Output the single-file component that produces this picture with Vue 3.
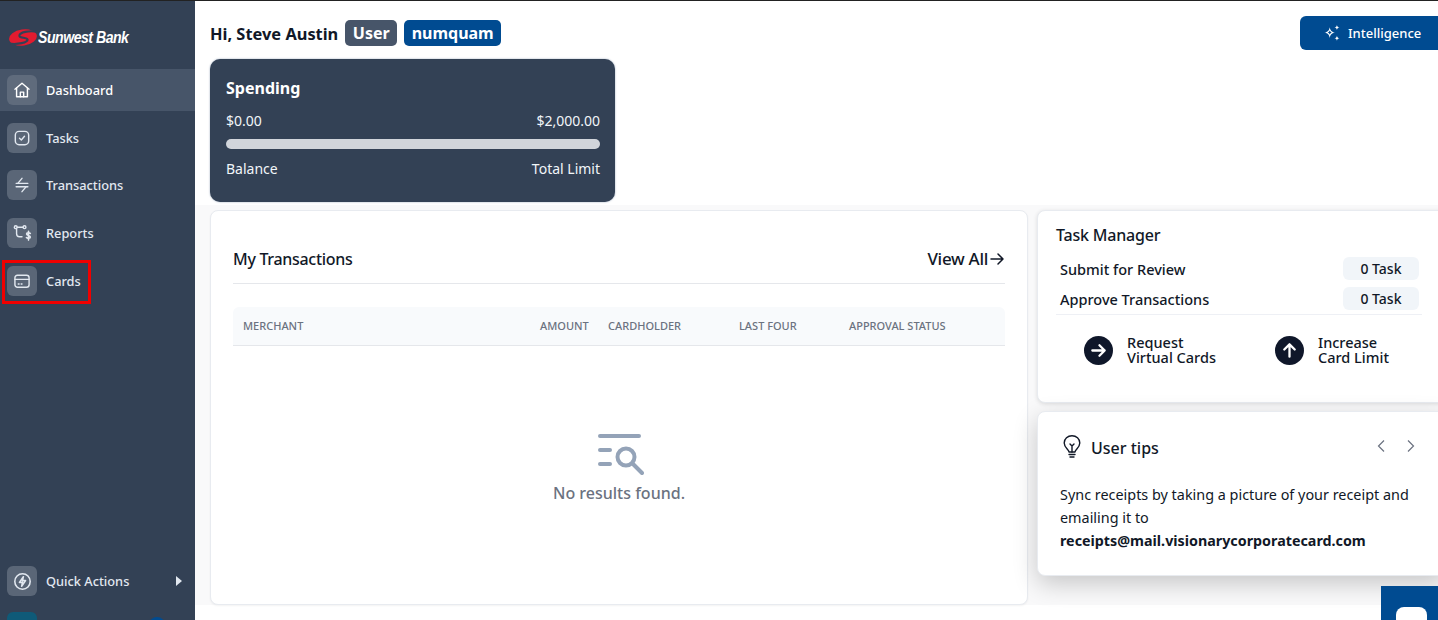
<script setup>
const navItems = [
  { label: "Dashboard", icon: "home", active: true },
  { label: "Tasks", icon: "tasks" },
  { label: "Transactions", icon: "swap" },
  { label: "Reports", icon: "reports" },
  { label: "Cards", icon: "card", marked: true },
];

const columns = ["Merchant", "Amount", "Cardholder", "Last Four", "Approval Status"];

const taskRows = [
  { label: "Submit for Review", count: "0 Task" },
  { label: "Approve Transactions", count: "0 Task" },
];
</script>

<template>
  <div class="page">
    <aside class="sidebar">
      <div class="logo">
        <svg class="logo-mark" viewBox="0 0 28 18" width="28" height="19">
          <ellipse cx="14" cy="9" rx="14" ry="8.200" transform="rotate(-8 14 9)" fill="#e31b2f" />
          <path d="M29 3.500C20 1.500 10 4 10.500 7.500 11 10 18 8.500 18.500 11 19 14 9 16.500 -1 15" fill="none" stroke="#334155" stroke-width="2.200" />
        </svg>
        <span class="logo-text">Sunwest Bank</span>
      </div>

      <nav class="nav">
        <a
          v-for="item in navItems"
          :key="item.label"
          class="nav-item"
          :class="{ active: item.active }"
        >
          <span class="nav-icon">
            <svg viewBox="0 0 24 24" width="20" height="20" fill="none" stroke="currentColor" stroke-width="1.700" stroke-linecap="round" stroke-linejoin="round">
              <template v-if="item.icon === 'home'">
                <path d="M3.500 11 12 3.800 20.500 11" />
                <path d="M5.500 9.500V20h13V9.500" />
                <path d="M10 20v-5.500h4V20" />
              </template>
              <template v-else-if="item.icon === 'tasks'">
                <rect x="4" y="4" width="16" height="16" rx="4.500" />
                <path d="m9 12.300 2.200 2 3.800-4.300" />
              </template>
              <template v-else-if="item.icon === 'swap'">
                <path d="M5 10h14" />
                <path d="M12 4 7 10" />
                <path d="M5 14h14" />
                <path d="m12 20 5-6" />
              </template>
              <template v-else-if="item.icon === 'reports'">
                <circle cx="4.500" cy="5" r="1.700" />
                <circle cx="15" cy="5" r="1.700" />
                <path d="M6.200 5h7.100" />
                <path d="M5.500 7v6a3.500 3.500 0 0 0 3.500 3.500h3" />
                <path d="M22 12.500c-1-1.200-4.500-1.200-4.500.7s4.500 1.500 4.500 3.500-3.500 2.200-4.700.8M19.800 10v10.500" stroke-width="1.900" />
              </template>
              <template v-else>
                <rect x="3.500" y="5" width="17" height="14.500" rx="3" />
                <path d="M3.500 10h17" />
                <path d="M7.500 15.500h1M11 15.500h1" />
              </template>
            </svg>
          </span>
          <span class="nav-label">{{ item.label }}</span>
          <span v-if="item.marked" class="marker"></span>
        </a>
      </nav>

      <div class="quick-actions">
        <a class="nav-item">
          <span class="nav-icon">
            <svg viewBox="0 0 24 24" width="21" height="21" fill="none" stroke="currentColor" stroke-width="1.800" stroke-linejoin="round">
              <circle cx="12" cy="12" r="8.800" />
              <path d="M13 6.500 8.500 13H12l-1 4.500 4.500-6.500H12z" />
            </svg>
          </span>
          <span class="nav-label">Quick Actions</span>
          <span class="caret"></span>
        </a>
        <div class="account">
          <span class="account-box"></span>
          <span class="account-dot"></span>
        </div>
      </div>
    </aside>

    <main class="main">
      <section class="top">
        <header class="greeting-row">
          <div class="greeting">
            <h1>Hi, Steve Austin</h1>
            <span class="badge badge-user">User</span>
            <span class="badge badge-org">numquam</span>
          </div>
          <button class="intelligence">
            <svg viewBox="0 0 20 20" width="18" height="18" fill="#fff">
              <path d="M7.500 3.500c.7 3.800 2.200 5.300 6 6-3.800.7-5.300 2.200-6 6-.7-3.800-2.200-5.300-6-6 3.800-.7 5.300-2.200 6-6zM7.500 7.300c-.4 1-1.100 1.800-2.200 2.200 1.100.4 1.800 1.200 2.200 2.200.4-1 1.100-1.800 2.200-2.200-1.100-.4-1.800-1.200-2.200-2.200z" fill-rule="evenodd" />
              <path d="M15.500 1c.3 1.700 1 2.400 2.800 2.800-1.800.3-2.500 1-2.800 2.800-.3-1.800-1-2.500-2.800-2.800 1.800-.4 2.500-1.100 2.800-2.800zM15.500 13c.3 1.700 1 2.400 2.800 2.800-1.800.3-2.500 1-2.800 2.800-.3-1.800-1-2.500-2.800-2.800 1.800-.4 2.500-1.100 2.800-2.800z" />
            </svg>
            Intelligence
          </button>
        </header>

        <div class="spending">
          <h2>Spending</h2>
          <div class="spending-line">
            <span>$0.00</span>
            <span>$2,000.00</span>
          </div>
          <div class="progress"></div>
          <div class="spending-line">
            <span>Balance</span>
            <span>Total Limit</span>
          </div>
        </div>
      </section>

      <section class="panels">
        <div class="card transactions">
          <div class="transactions-head">
            <h3>My Transactions</h3>
            <a class="view-all">
              View All
              <svg viewBox="0 0 16 16" width="16" height="16" fill="none" stroke="currentColor" stroke-width="1.500" stroke-linecap="round" stroke-linejoin="round">
                <path d="M2 8h12M9 3l5 5-5 5" />
              </svg>
            </a>
          </div>
          <div class="table-head">
            <span v-for="col in columns" :key="col">{{ col }}</span>
          </div>
          <div class="empty">
            <svg viewBox="0 0 46 44" width="46" height="44" fill="none" stroke="#94a3b8" stroke-width="4" stroke-linecap="round">
              <path d="M2 3h39M2 17h10M2 31h10" />
              <circle cx="28" cy="24" r="8.500" />
              <path d="m35 31 9 9" />
            </svg>
            <p>No results found.</p>
          </div>
        </div>

        <div class="side">
          <div class="card task-manager">
            <h3>Task Manager</h3>
            <div v-for="row in taskRows" :key="row.label" class="task-row">
              <span>{{ row.label }}</span>
              <span class="pill">{{ row.count }}</span>
            </div>
            <div class="task-actions">
              <a class="task-action">
                <span class="round">
                  <svg viewBox="0 0 20 20" width="19" height="19" fill="none" stroke="#fff" stroke-width="2.400" stroke-linecap="round" stroke-linejoin="round">
                    <path d="M3.500 10h13M11 4.500l5.500 5.500-5.500 5.500" />
                  </svg>
                </span>
                <span class="task-action-text">Request<br />Virtual Cards</span>
              </a>
              <a class="task-action">
                <span class="round">
                  <svg viewBox="0 0 20 20" width="19" height="19" fill="none" stroke="#fff" stroke-width="2.400" stroke-linecap="round" stroke-linejoin="round">
                    <path d="M10 16.500v-13M4.500 9 10 3.500 15.500 9" />
                  </svg>
                </span>
                <span class="task-action-text">Increase<br />Card Limit</span>
              </a>
            </div>
          </div>

          <div class="card tips">
            <div class="tips-head">
              <svg viewBox="0 0 18 24" width="18" height="24" fill="none" stroke="#111827" stroke-width="1.400" stroke-linecap="round" stroke-linejoin="round">
                <path d="M6 17c0-2.500-4.800-4.300-4.800-9a7.800 7.300 0 0 1 15.600 0c0 4.700-4.800 6.500-4.800 9z" />
                <path d="M9 17v-6l-2-2M9 11l2-2M6 19.500h6M7 22h4" />
              </svg>
              <h3>User tips</h3>
              <div class="tips-nav">
                <svg viewBox="0 0 10 14" width="10" height="14" fill="none" stroke="#6b7280" stroke-width="1.200"><path d="M8 1.500 2.500 7 8 12.500" /></svg>
                <svg viewBox="0 0 10 14" width="10" height="14" fill="none" stroke="#6b7280" stroke-width="1.200"><path d="M2 1.500 7.500 7 2 12.500" /></svg>
              </div>
            </div>
            <p>
              Sync receipts by taking a picture of your receipt and emailing it to
              <strong>receipts@mail.visionarycorporatecard.com</strong>
            </p>
          </div>
        </div>
      </section>

      <button class="chat"><span class="chat-bubble"></span></button>
    </main>
  </div>
</template>

<style>
html,
body {
  margin: 0;
  overflow: hidden;
}
</style>

<style scoped>
* {
  box-sizing: border-box;
}

.page {
  display: flex;
  width: 1438px;
  height: 620px;
  overflow: hidden;
  border-top: 1px solid #222;
  font-family: "Noto Sans", "Open Sans", sans-serif;
  color: #111827;
  background: #fff;
}

.sidebar {
  display: flex;
  flex-direction: column;
  flex: none;
  width: 195px;
  background: #334155;
  color: #e2e8f0;
}

.logo {
  display: flex;
  align-items: center;
  gap: 1px;
  height: 68px;
  padding: 5px 0 0 9px;
}

.logo-text {
  font-family: "Liberation Sans", sans-serif;
  font-size: 17px;
  font-weight: 700;
  font-style: italic;
  letter-spacing: -0.600px;
  white-space: nowrap;
  color: #fff;
  transform: scaleX(0.83);
  transform-origin: left center;
}

.nav {
  display: flex;
  flex-direction: column;
  gap: 5.700px;
}

.nav-item {
  position: relative;
  display: flex;
  align-items: center;
  gap: 9px;
  height: 42px;
  padding-left: 7px;
  font-size: 12.800px;
  font-weight: 500;
}

.nav-item.active {
  background: #475569;
  color: #fff;
}

.nav-icon {
  display: flex;
  align-items: center;
  justify-content: center;
  width: 30px;
  height: 30px;
  border-radius: 6px;
  background: #5a6677;
}

.active .nav-icon {
  background: #5f6b7c;
}

.marker {
  position: absolute;
  top: 0;
  left: 2px;
  width: 89px;
  height: 44px;
  border: 3px solid #f00000;
}

.quick-actions {
  margin-top: auto;
}

.caret {
  margin-left: auto;
  margin-right: 13px;
  border-left: 6px solid #e2e8f0;
  border-top: 5px solid transparent;
  border-bottom: 5px solid transparent;
}

.account {
  display: flex;
  justify-content: space-between;
  height: 18px;
  padding: 10px 30px 0 7px;
}

.account-box {
  width: 30px;
  height: 30px;
  border-radius: 6px;
  background: #0f5a78;
}

.account-dot {
  width: 16px;
  height: 16px;
  margin-top: 5px;
  border-radius: 50%;
  background: #004b91;
}

.main {
  position: relative;
  flex: 1;
  min-width: 0;
}

.top {
  height: 204px;
  padding-left: 15px;
}

.greeting-row {
  display: flex;
  align-items: center;
  justify-content: space-between;
  height: 58px;
  padding-top: 6px;
}

.greeting {
  display: flex;
  align-items: center;
}

.greeting h1 {
  margin: 0 7px 0 0;
  font-size: 16.400px;
  font-weight: 700;
}

.badge {
  height: 26px;
  padding: 0 7.500px;
  margin-right: 7px;
  border-radius: 5px;
  font-size: 16px;
  font-weight: 700;
  line-height: 26px;
  color: #fff;
}

.badge-user {
  background: #475569;
}

.badge-org {
  background: #004b91;
}

.intelligence {
  display: flex;
  align-items: center;
  gap: 7px;
  width: 138px;
  height: 34px;
  margin-top: -1px;
  padding: 1px 0 0 23px;
  border: 0;
  border-radius: 6px 0 0 6px;
  background: #004b91;
  color: #fff;
  font-family: inherit;
  font-size: 13px;
  font-weight: 500;
}

.spending {
  width: 405px;
  height: 143px;
  padding: 17px 15px 16px 16px;
  border-radius: 10px;
  background: #334155;
  color: #f1f5f9;
  font-size: 14px;
  box-shadow: 0 0 2px #94a3b8;
}

.spending h2 {
  margin: 0 0 11px;
  color: #fff;
  font-size: 16px;
  font-weight: 700;
  line-height: 24px;
}

.spending-line {
  display: flex;
  justify-content: space-between;
  line-height: 20px;
}

.progress {
  height: 10px;
  margin: 8px 0 10px;
  border-radius: 5px;
  background: #d1d5db;
}

.panels {
  display: flex;
  gap: 9px;
  height: 400px;
  padding: 5px 0 0 15px;
  background: #f9f9fa;
}

.card {
  border: 1px solid #e8ebf0;
  border-radius: 8px;
  background: #fff;
}

.card h3 {
  margin: 0;
  font-weight: 500;
}

.transactions {
  flex: none;
  width: 818px;
  height: 395px;
  padding: 0 22px;
  box-shadow: 0 1px 2px rgba(0, 0, 0, 0.05);
}

.transactions-head {
  display: flex;
  align-items: center;
  justify-content: space-between;
  height: 73px;
  border-bottom: 1px solid #e5e7eb;
}

.transactions-head h3 {
  padding: 24px 0 0;
  font-size: 16px;
  letter-spacing: -0.300px;
}

.view-all {
  display: flex;
  align-items: center;
  gap: 1px;
  padding-top: 23px;
  font-size: 17px;
  font-weight: 500;
  letter-spacing: -0.300px;
}

.table-head {
  display: grid;
  grid-template-columns: 297px 68px 131px 110px auto;
  align-items: center;
  height: 39px;
  margin-top: 23px;
  padding: 0 0 1px 10px;
  border-bottom: 1px solid #e5e7eb;
  border-radius: 6px 6px 0 0;
  background: #f8fafc;
  color: #6b7280;
  font-size: 11px;
  font-weight: 500;
  text-transform: uppercase;
}

.empty {
  display: flex;
  flex-direction: column;
  align-items: center;
  margin-top: 87px;
}

.empty svg {
  margin-left: 3px;
}

.empty p {
  margin: 5px 0 0;
  color: #6b7280;
  font-size: 16px;
  font-weight: 500;
}

.side {
  display: flex;
  flex: none;
  flex-direction: column;
  gap: 8px;
  width: 410px;
}

.task-manager {
  height: 193px;
  padding: 12px 18px;
  box-shadow: 0 1px 4px rgba(0, 0, 0, 0.12);
}

.task-manager h3 {
  margin-bottom: 10px;
  font-size: 16px;
  letter-spacing: -0.200px;
  line-height: 24px;
}

.task-row {
  display: flex;
  align-items: center;
  justify-content: space-between;
  width: 363px;
  height: 23px;
  margin-bottom: 7px;
  padding-left: 4px;
  font-size: 14.500px;
  font-weight: 500;
}

.pill {
  width: 76px;
  height: 23px;
  border-radius: 6px;
  background: #f1f5f9;
  font-size: 14px;
  line-height: 23px;
  text-align: center;
}

.task-actions {
  display: flex;
  width: 366px;
  margin-top: -3px;
  padding: 20px 0 0 28px;
  border-top: 1px solid #eef0f5;
}

.task-action {
  display: flex;
  flex: none;
  align-items: center;
  gap: 14px;
  width: 191px;
  font-size: 14.500px;
  font-weight: 500;
  line-height: 15px;
}

.round {
  display: flex;
  align-items: center;
  justify-content: center;
  width: 29px;
  height: 29px;
  border-radius: 50%;
  background: #0f172a;
}

.tips {
  height: 165px;
  padding: 23px 22px 20px;
  box-shadow: 0 8px 24px rgba(0, 0, 0, 0.2);
}

.tips-head {
  display: flex;
  align-items: center;
  gap: 10px;
  padding-left: 3px;
}

.tips-head h3 {
  font-size: 16px;
  padding-top: 1px;
}

.tips-nav {
  display: flex;
  gap: 20px;
  margin-left: auto;
  padding-right: 8px;
  margin-top: -2px;
}

.tips p {
  width: 360px;
  margin: 24px 0 0;
  font-size: 14.400px;
  line-height: 23px;
}

.tips strong {
  display: block;
  font-size: 14.300px;
  font-weight: 700;
}

.chat {
  position: absolute;
  right: 0;
  bottom: 0;
  width: 57px;
  height: 34px;
  padding: 0;
  border: 0;
  background: #004b91;
}

.chat-bubble {
  position: absolute;
  top: 21px;
  left: 15px;
  width: 31px;
  height: 20px;
  border-radius: 8px;
  background: #fff;
}
</style>
